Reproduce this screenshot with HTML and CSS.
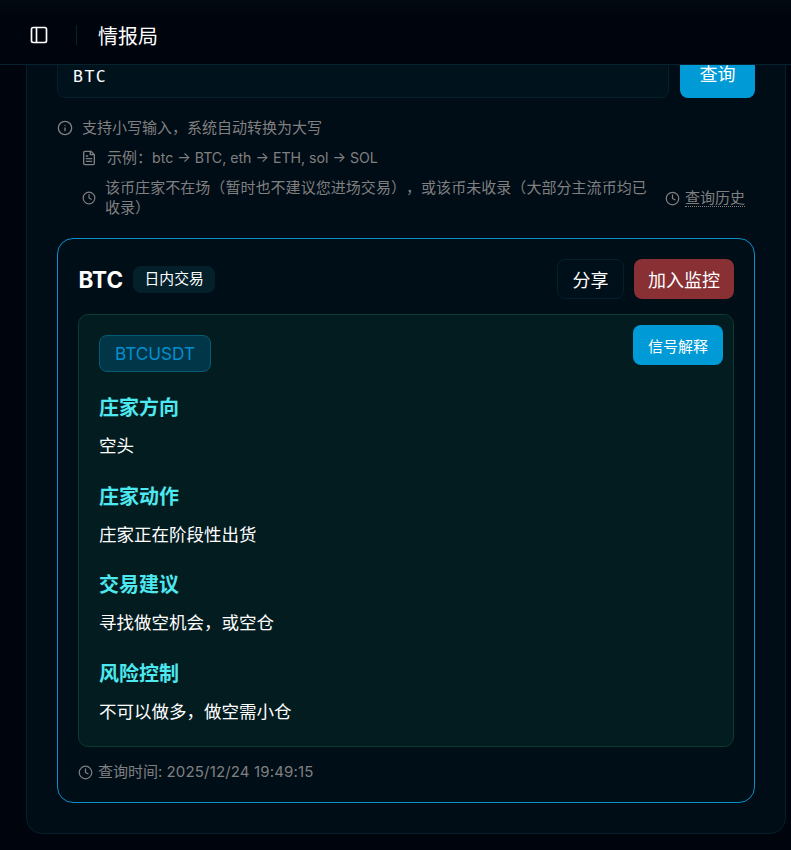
FILE: index.html
```html
<!DOCTYPE html>
<html>
<head>
  <title>情报局</title>
  <link rel="stylesheet" href="styles.css">
</head>
<body>
  <header class="topbar">
    <svg class="icon-panel" width="20" height="20" viewBox="0 0 24 24" fill="none" stroke="currentColor" stroke-width="2" stroke-linecap="round" stroke-linejoin="round"><rect x="3" y="3" width="18" height="18" rx="2"/><path d="M9 3v18"/></svg>
    <span class="topbar-line"></span>
    <span class="topbar-title">情报局</span>
  </header>

  <main class="page">
    <section class="query-card">
      <div class="query-row">
        <input class="query-input" type="text" value="BTC">
        <button class="query-btn">查询</button>
      </div>

      <div class="hint">
        <svg class="icon" width="16" height="16" viewBox="0 0 24 24" fill="none" stroke="currentColor" stroke-width="2" stroke-linecap="round" stroke-linejoin="round"><circle cx="12" cy="12" r="10"/><path d="M12 16v-4"/><path d="M12 8h.01"/></svg>
        <span>支持小写输入，系统自动转换为大写</span>
      </div>
      <div class="hint hint-sub">
        <svg class="icon" width="16" height="16" viewBox="0 0 24 24" fill="none" stroke="currentColor" stroke-width="2" stroke-linecap="round" stroke-linejoin="round"><path d="M15 2H6a2 2 0 0 0-2 2v16a2 2 0 0 0 2 2h12a2 2 0 0 0 2-2V7z"/><path d="M14 2v5h6"/><path d="M16 13H8"/><path d="M16 17H8"/><path d="M10 9H8"/></svg>
        <span>示例：<span class="hint-latin">btc → BTC, eth → ETH, sol → SOL</span></span>
      </div>
      <div class="hint-row">
        <div class="hint hint-sub hint-long">
          <svg class="icon" width="14" height="14" viewBox="0 0 24 24" fill="none" stroke="currentColor" stroke-width="2" stroke-linecap="round" stroke-linejoin="round"><circle cx="12" cy="12" r="10"/><path d="M12 6v6l4 2"/></svg>
          <span>该币庄家不在场（暂时也不建议您进场交易），或该币未收录（大部分主流币均已收录）</span>
        </div>
        <a class="history-link" href="#">
          <svg class="icon" width="15" height="15" viewBox="0 0 24 24" fill="none" stroke="currentColor" stroke-width="2" stroke-linecap="round" stroke-linejoin="round"><circle cx="12" cy="12" r="10"/><path d="M12 6v6l4 2"/></svg>
          <span>查询历史</span>
        </a>
      </div>

      <div class="result-card">
        <div class="result-head">
          <div class="result-name">
            <strong>BTC</strong>
            <span class="result-tag">日内交易</span>
          </div>
          <div class="result-actions">
            <button class="btn-share">分享</button>
            <button class="btn-watch">加入监控</button>
          </div>
        </div>

        <div class="signal-panel">
          <button class="btn-explain">信号解释</button>
          <span class="pair-chip">BTCUSDT</span>

          <h3 class="signal-label">庄家方向</h3>
          <p class="signal-value">空头</p>

          <h3 class="signal-label">庄家动作</h3>
          <p class="signal-value">庄家正在阶段性出货</p>

          <h3 class="signal-label">交易建议</h3>
          <p class="signal-value">寻找做空机会，或空仓</p>

          <h3 class="signal-label">风险控制</h3>
          <p class="signal-value">不可以做多，做空需小仓</p>
        </div>

        <div class="result-time">
          <svg class="icon" width="15" height="15" viewBox="0 0 24 24" fill="none" stroke="currentColor" stroke-width="2" stroke-linecap="round" stroke-linejoin="round"><circle cx="12" cy="12" r="10"/><path d="M12 6v6l4 2"/></svg>
          <span>查询时间: <span class="time-value">2025/12/24 19:49:15</span></span>
        </div>
      </div>
    </section>
  </main>
</body>
</html>
```

FILE: styles.css
```css
* {
  box-sizing: border-box;
}

html, body {
  height: 100%;
}

body {
  margin: 0;
  overflow: hidden;
  background-color: #00040d;
  color: #fff;
  font-family: Inter, "Noto Sans CJK SC", sans-serif;
}

button {
  font-family: inherit;
  color: #fff;
  cursor: pointer;
}

/* Top bar */
.topbar {
  position: fixed;
  top: 0;
  left: 0;
  right: 0;
  z-index: 10;
  height: 65px;
  padding: 6px 0 0 29px;
  display: flex;
  align-items: center;
  background: linear-gradient(#020910, #00040d 30%);
  border-bottom: 1px solid #06222e;
}

.topbar-line {
  width: 1px;
  height: 20px;
  margin: 0 21px 0 27px;
  background-color: #06222e;
}

.topbar-title {
  font-size: 20px;
}

/* Page */
.page {
  padding: 20px 5px 16px 26px;
}

.query-card {
  padding: 29px 30px 30px 30px;
  background-color: #000c16;
  border: 1px solid #05202c;
  border-radius: 16px;
}

.query-row {
  display: flex;
  gap: 11px;
}

.query-input {
  flex: 1;
  min-width: 0;
  height: 48px;
  padding: 4px 15px 0 15px;
  background-color: #00131d;
  border: 1px solid #05202c;
  border-radius: 8px;
  color: #fff;
  font-family: "DejaVu Sans Mono", monospace;
  font-size: 16.5px;
  letter-spacing: 1.5px;
}

.query-btn {
  width: 75px;
  height: 48px;
  padding: 0 0 2px 0;
  background-color: #009ad6;
  border: none;
  border-radius: 8px;
  font-size: 18px;
}

/* Hints */
.hint {
  display: flex;
  align-items: center;
  gap: 10px;
  margin-top: 10px;
  color: #808080;
  font-size: 15px;
  line-height: 20px;
  text-spacing-trim: space-all;
}

.query-row + .hint {
  margin-top: 20px;
  gap: 9px;
}

.hint-latin {
  font-size: 14.15px;
}

.hint-sub {
  padding-left: 24px;
}

.hint-row {
  display: flex;
  align-items: center;
  justify-content: space-between;
  padding-right: 10px;
  margin-top: 10px;
}

.hint-long {
  width: 594px;
  margin-top: 0;
  padding-left: 25px;
  gap: 9px;
  letter-spacing: 0.05px;
}

.icon {
  flex: none;
}

.history-link {
  display: flex;
  align-items: center;
  gap: 5px;
  color: #808080;
  font-size: 15px;
  text-decoration: none;
}

.history-link span {
  border-bottom: 1px dotted #808080;
  line-height: 17px;
}

/* Result */
.result-card {
  margin-top: 20px;
  padding: 20px;
  background-color: #000e18;
  border: 1px solid #0b8fc9;
  border-radius: 16px;
}

.result-head {
  display: flex;
  align-items: center;
  justify-content: space-between;
  height: 40px;
}

.result-name {
  display: flex;
  align-items: center;
  gap: 10px;
}

.result-name strong {
  margin-left: 0.5px;
  font-size: 22.5px;
}

.result-tag {
  padding: 0 11.5px;
  height: 27px;
  line-height: 27px;
  background-color: #03202b;
  border-radius: 8px;
  font-size: 14.8px;
}

.result-actions {
  display: flex;
  gap: 10px;
}

.btn-share {
  width: 67px;
  height: 40px;
  background-color: #00101a;
  border: 1px solid #05202c;
  border-radius: 8px;
  font-size: 18px;
}

.btn-watch {
  width: 100px;
  height: 40px;
  background-color: #883033;
  border: none;
  border-radius: 8px;
  font-size: 18px;
}

.signal-panel {
  position: relative;
  margin-top: 15px;
  padding: 20px 20px 20.5px 20px;
  background-color: #031c1f;
  border: 1px solid #0b3a2f;
  border-radius: 10px;
}

.btn-explain {
  position: absolute;
  top: 10px;
  right: 10px;
  width: 90px;
  height: 40px;
  background-color: #009ad6;
  border: none;
  border-radius: 8px;
  font-size: 15px;
}

.pair-chip {
  display: block;
  width: 112px;
  height: 37px;
  margin-bottom: -0.5px;
  line-height: 35px;
  text-align: center;
  background-color: #003647;
  border: 1px solid #055a75;
  border-radius: 8px;
  color: #0090d0;
  font-size: 17.2px;
}

.signal-label {
  margin: 21.5px 0 9px 0;
  color: #4de8f0;
  font-size: 20px;
  font-weight: 700;
  line-height: 30px;
}

.signal-value {
  margin: 0;
  font-size: 17.5px;
  line-height: 28px;
}

.result-time {
  display: flex;
  align-items: center;
  gap: 5px;
  margin-top: 15px;
  color: #808080;
  font-size: 15px;
  line-height: 20px;
}

.time-value {
  letter-spacing: 0.16px;
}
```
